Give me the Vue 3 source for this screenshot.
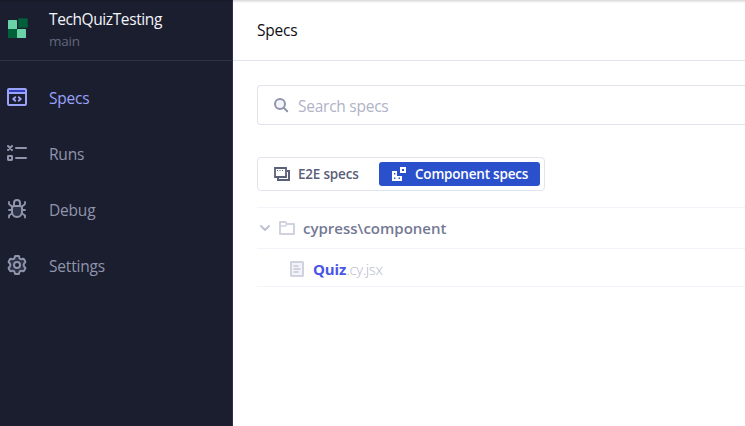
<script setup>
const nav = [
  { id: 'specs', label: 'Specs', active: true },
  { id: 'runs', label: 'Runs' },
  { id: 'debug', label: 'Debug' },
  { id: 'settings', label: 'Settings' },
]
</script>

<template>
  <div class="app">
    <aside class="sidebar">
      <header class="project">
        <svg class="logo" width="22" height="22" viewBox="0 0 22 22">
          <rect x="1" y="3" width="9" height="9" rx=".6" fill="#69d3a7" />
          <rect x="11.3" y="1.4" width="9.3" height="9.3" rx=".6" fill="#00603a" stroke="#0d4a3a" stroke-width=".8" />
          <rect x="1" y="12" width="9" height="9" rx=".6" fill="#00603a" />
          <rect x="10" y="12" width="9" height="9" rx=".6" fill="#69d3a7" />
        </svg>
        <div class="names">
          <div class="name">TechQuizTesting</div>
          <div class="branch">main</div>
        </div>
      </header>
      <nav class="nav">
        <a v-for="item in nav" :key="item.id" class="item" :class="[item.id, { active: item.active }]">
          <svg v-if="item.id === 'specs'" width="22" height="22" viewBox="0 0 22 22" fill="none" stroke="#9aa2fc" stroke-width="2" stroke-linecap="round" stroke-linejoin="round">
            <rect x="2" y="3" width="18" height="16" rx="1" fill="#1b1e2e" />
            <path d="M3 5h16" stroke="#2f3dbd" stroke-linecap="butt" />
            <path d="M2 7h18" stroke-width="2" />
            <path d="M9.3 11.2 7.2 13l2.1 1.8M12.7 11.2l2.1 1.8-2.1 1.8" stroke-width="1.8" />
          </svg>
          <svg v-else-if="item.id === 'runs'" width="22" height="22" viewBox="0 0 22 22" fill="none" stroke="#9095ad" stroke-width="2">
            <path d="m2 4 4 4M6 4 2 8" stroke-width="2.1" stroke-linecap="round" />
            <rect x="2" y="14" width="4" height="4" rx=".4" />
            <path d="M10 6h10M10 16h10" stroke-linecap="round" />
          </svg>
          <svg v-else-if="item.id === 'debug'" width="22" height="22" viewBox="0 0 22 22" fill="none" stroke="#9095ad" stroke-width="2" stroke-linecap="round" stroke-linejoin="round">
            <path d="M8 7V5a3 3 0 0 1 6 0v2" />
            <path d="M8.2 8h5.6c1.2 0 2.2 1 2.2 2.3V14a5 5 0 0 1-10 0v-3.7c0-1.3 1-2.3 2.2-2.3Z" fill="#2e3247" />
            <path d="M3 4v2l3.2 2.8M19 4v2l-3.2 2.8M3 12h3M16 12h3M3 19.5v-2l3.3-2.3M19 19.5v-2l-3.3-2.3" stroke-width="1.8" />
          </svg>
          <svg v-else width="22" height="22" viewBox="0 0 22 22" fill="none" stroke="#9095ad" stroke-width="2" stroke-linejoin="round">
            <path d="M9.5 2h3q.5 0 .6.5l.3 1.4q.7 1.7 2.5 1.2l1.2-.4q.5-.1.8.3l1.4 2.5q.3.5-.1.9l-1 .9q-1.3 1.7 0 3.4l1 .9q.4.4.1.9l-1.4 2.5q-.3.4-.8.3l-1.2-.4q-1.8-.5-2.5 1.2l-.3 1.4q-.1.5-.6.5h-3q-.5 0-.6-.5l-.3-1.4q-.7-1.7-2.5-1.2l-1.2.4q-.5.1-.8-.3l-1.4-2.5q-.3-.5.1-.9l1-.9q1.3-1.7 0-3.4l-1-.9q-.4-.4-.1-.9l1.4-2.5q.3-.4.8-.3l1.2.4q1.8.5 2.5-1.2l.3-1.4q.1-.5.6-.5Z" fill="#2e3247" />
            <circle cx="11" cy="11" r="3" fill="#1b1e2e" />
          </svg>
          <span class="label">{{ item.label }}</span>
        </a>
      </nav>
    </aside>

    <main class="main">
      <header class="topbar"><span class="title">Specs</span></header>
      <section class="content">
        <div class="search">
          <svg width="16" height="16" viewBox="0 0 16 16" fill="none" stroke="#9095ad" stroke-width="2" stroke-linecap="round">
            <circle cx="7" cy="7" r="5" fill="#f3f4fa" />
            <path d="m10.8 10.8 3.4 3.4" />
          </svg>
          <span class="placeholder">Search specs</span>
        </div>

        <div class="tabs">
          <div class="tab e2e">
            <svg width="16" height="16" viewBox="0 0 16 16" fill="none" stroke="#5a5f7a" stroke-width="2">
              <path d="M13 5h2v9H4v-2" />
              <path d="M1 2h11v9H1Z" stroke-width="1.8" />
              <path d="M3 4.5h1M5.5 4.5h1M8 4.5h1" stroke-width="1" />
            </svg>
            <span>E2E specs</span>
          </div>
          <div class="tab component">
            <svg width="16" height="16" viewBox="0 0 16 16">
              <path d="M1 5h5v5h5v5H1Z" fill="#fff" />
              <path d="M9 1h6v6H9Z" fill="#fff" />
              <path d="M3 7h1.4v1.5H3ZM3 11.6h1.4V13H3ZM7.6 11.6H9V13H7.6ZM11 3h2v2h-2Z" fill="#2a50cc" />
            </svg>
            <span>Component specs</span>
          </div>
        </div>

        <div class="tree">
          <div class="row folder">
            <svg class="chevron" width="16" height="16" viewBox="0 0 16 16" fill="none" stroke="#bfc2d4" stroke-width="2" stroke-linecap="round" stroke-linejoin="round">
              <path d="m4 6 4 4 4-4" />
            </svg>
            <svg class="foldericon" width="16" height="16" viewBox="0 0 16 16" fill="none" stroke="#d0d2e0" stroke-width="2" stroke-linejoin="round">
              <path d="M1 2h5.5L8 4h7v10H1Z" />
              <path d="M1 6h5.5L8 4" stroke-width="1.4" />
            </svg>
            <span class="path">cypress\component</span>
          </div>
          <div class="row file">
            <svg class="fileicon" width="16" height="16" viewBox="0 0 16 16" fill="none" stroke="#d0d2e0" stroke-width="2" stroke-linejoin="round">
              <rect x="2" y="1" width="12" height="14" rx=".4" fill="#f3f4fa" />
              <path d="M4.5 5h5M4.5 8h7M4.5 11h5" stroke-width="1.6" stroke="#c4c7d8" />
            </svg>
            <span class="filename"><b>Quiz</b><span class="ext">.cy.jsx</span></span>
          </div>
        </div>
      </section>
    </main>
    <div class="shade"></div>
  </div>
</template>

<style>
body { background: #fff; overflow: hidden; }
</style>

<style scoped>
* { box-sizing: border-box; }
.app {
  position: relative;
  display: flex;
  width: 745px;
  height: 426px;
  overflow: hidden;
  font-family: "Open Sans", "Noto Sans", sans-serif;
  font-size: 15.5px;
  letter-spacing: -.2px;
  line-height: 24px;
  white-space: nowrap;
}
svg { display: block; flex: none; }
.sidebar { width: 233px; flex: none; background: #1b1e2e; border-right: 1px solid #2e3247; }
.project { display: flex; height: 61px; padding: 7px 0 0 7px; border-bottom: 1px solid #2e3247; }
.logo { margin-top: 10px; }
.names { margin-left: 20px; }
.name { color: #f3f4fa; letter-spacing: -.4px; }
.branch { padding-top: 1px; color: #62677f; font-size: 13.5px; line-height: 19px; letter-spacing: -.2px; }
.nav { padding-top: 8px; }
.item { display: flex; align-items: center; height: 56px; padding-left: 6px; gap: 21px; color: #9095ad; }
.label { padding-top: 1px; }
.item.active { color: #9aa2fc; }
.main { flex: 1; min-width: 0; background: #fff; }
.topbar { height: 61px; padding: 18px 24px 0; border-bottom: 1px solid #e1e3ed; color: #0d0e14; }
.content { padding: 24px 0 0 24px; }
.search { display: flex; align-items: center; height: 40px; padding-left: 15px; gap: 9px; border: 1px solid #e1e3ed; border-right: 0; border-radius: 4px 0 0 4px; color: #afb3c7; letter-spacing: -.25px; }
.placeholder { padding-top: 1px; }
.tabs { display: flex; width: 288px; height: 34px; margin-top: 32px; padding: 4px; border: 1px solid #e1e3ed; border-radius: 4px; font-size: 13.5px; font-weight: 600; letter-spacing: -.2px; }
.tab { display: flex; align-items: center; height: 24px; gap: 8px; border-radius: 3px; }
.e2e { width: 117px; padding-left: 12px; color: #5a5f7a; }
.component { width: 161px; padding-left: 12px; background: #2a50cc; color: #fff; }
.tree { margin-top: 16px; border-top: 1px solid #f3f4fa; }
.row { display: flex; align-items: center; border-bottom: 1px solid #f3f4fa; }
.folder { height: 41px; color: #747994; font-size: 15px; font-weight: 600; letter-spacing: 0; }
.foldericon { margin-left: 6px; }
.path { margin-left: 8px; }
.file { height: 38px; padding-left: 32px; gap: 8px; font-size: 15px; letter-spacing: 0; }
.fileicon { margin-top: 2px; }
.filename { padding-top: 2px; }
.file b { color: #4956e3; font-weight: 700; letter-spacing: -.1px; }
.ext { color: #b6b9cc; font-weight: 300; letter-spacing: -.4px; }
.shade { position: absolute; top: 0; left: 0; width: 100%; height: 3px; background: linear-gradient(rgba(0, 0, 0, .16), transparent); }
</style>
